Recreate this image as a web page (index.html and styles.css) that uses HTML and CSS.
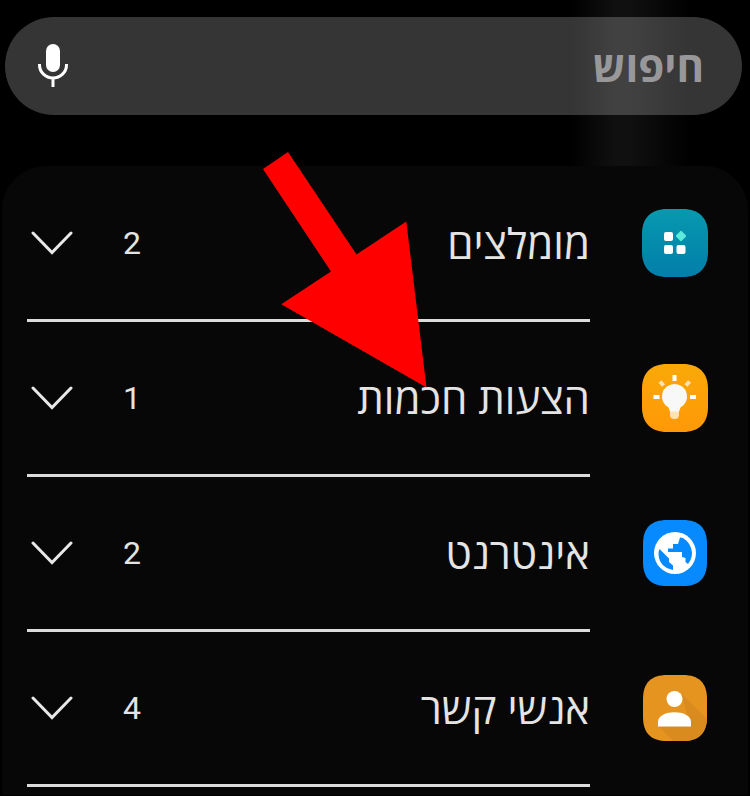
FILE: index.html
```html
<!DOCTYPE html>
<html lang="he" dir="rtl">
<head>
<meta charset="utf-8">
<meta name="viewport" content="width=device-width, initial-scale=1">
<title>חיפוש</title>
<link rel="stylesheet" href="styles.css">
</head>
<body>
<header class="top">
  <form class="search" role="search">
    <input class="search-input" type="text" placeholder="חיפוש" aria-label="חיפוש">
    <button class="mic" type="button" aria-label="חיפוש קולי">
      <svg width="32" height="46" viewBox="0 0 32 46"><rect x="9" y="1" width="14" height="28" rx="7" fill="#fff"/><path d="M2.500 21v1a13.500 13 0 0 0 27 0v-1M16 35v9" fill="none" stroke="#fff" stroke-width="3"/></svg>
    </button>
  </form>
</header>
<main class="panel">
  <ul class="list">
    <li><button class="row" type="button" aria-expanded="false">
      <svg class="icon" viewBox="0 0 66 68"><defs><linearGradient id="teal" x2="0" y2="1"><stop stop-color="#0799ae"/><stop offset="1" stop-color="#027eaa"/></linearGradient></defs><path d="M25 0H41C57 0 66 9 66 25V43C66 59 57 68 41 68H25C9 68 0 59 0 43V25C0 9 9 0 25 0Z" fill="url(#teal)"/><g fill="#fff"><rect x="22" y="23" width="9" height="9" rx="2"/><rect x="22" y="36" width="9" height="9" rx="2"/><rect x="34.500" y="36" width="9" height="9" rx="2"/></g><rect x="35" y="23" width="8" height="8" rx="1.500" transform="rotate(45 39 27)" fill="#5fe8dc"/></svg>
      <span class="body"><span class="label">מומלצים</span><span class="count">2</span>
      <svg class="chevron" viewBox="0 0 42 24"><path d="M2 2 21 21.500 40 2"/></svg></span>
    </button></li>
    <li><button class="row" type="button" aria-expanded="false">
      <svg class="icon" viewBox="0 0 66 68"><defs><linearGradient id="amber" x2="0" y2="1"><stop stop-color="#f9a908"/><stop offset="1" stop-color="#ff9807"/></linearGradient></defs><path d="M25 0H41C57 0 66 9 66 25V43C66 59 57 68 41 68H25C9 68 0 59 0 43V25C0 9 9 0 25 0Z" fill="url(#amber)"/><path d="M28 44h9v7q0 4-4.500 4t-4.500-4Z" fill="#fde2b4"/><path d="M32.500 20a12.500 12.500 0 0 1 6 23.500l-1.500 4h-9L26.500 43.500A12.500 12.500 0 0 1 32.500 20Z" fill="#f8f8f8"/><g stroke="#fff" stroke-width="4"><path d="M32.500 11v6M11.500 33h6M48 33h6"/><path d="m18 17.500 3.500 4M47.500 17.500l-3.500 4" stroke="#fde2b4"/></g></svg>
      <span class="body"><span class="label">הצעות חכמות</span><span class="count">1</span>
      <svg class="chevron" viewBox="0 0 42 24"><path d="M2 2 21 21.500 40 2"/></svg></span>
    </button></li>
    <li><button class="row" type="button" aria-expanded="false">
      <svg class="icon" viewBox="0 0 66 68"><path d="M25 1H41C57 1 65 9 65 25V43C65 59 57 67 41 67H25C9 67 1 59 1 43V25C1 9 9 1 25 1Z" fill="#078afd"/><circle cx="33" cy="34" r="21" fill="#fff"/><path d="M38 18.500 41 19Q49 24 50 33.500 50 40 46 45L43.500 43V39L40 38V33H26V29.500H31V25H36Z" fill="#078afd"/><path d="M17.500 30 27 39.500V43L31 46.500V51Q17 48 16.500 35Q16.500 32 17.500 30Z" fill="#078afd"/></svg>
      <span class="body"><span class="label">אינטרנט</span><span class="count">2</span>
      <svg class="chevron" viewBox="0 0 42 24"><path d="M2 2 21 21.500 40 2"/></svg></span>
    </button></li>
    <li><button class="row" type="button" aria-expanded="false">
      <svg class="icon" viewBox="0 0 66 68"><path d="M25 1H41C57 1 65 9 65 25V43C65 59 57 67 41 67H25C9 67 1 59 1 43V25C1 9 9 1 25 1Z" fill="#e5941f"/><path d="M39 19 65 45C64 59 57 67 41 67H31L17 52 45 40Z" fill="#da8b1e"/><circle cx="32.500" cy="25" r="8" fill="#fff"/><path d="M16 52.500V48C16 35 49 35 49 48v4.500Z" fill="#fff"/></svg>
      <span class="body"><span class="label">אנשי קשר</span><span class="count">4</span>
      <svg class="chevron" viewBox="0 0 42 24"><path d="M2 2 21 21.500 40 2"/></svg></span>
    </button></li>
  </ul>
</main>
<svg class="pointer" width="166" height="238" viewBox="262 151 166 238" aria-hidden="true"><path d="M263 169 288 152 356.500 254.500 406.300 221.500 426.500 387.500 281.300 304.300 331 271.500Z" fill="#f00"/></svg>
</body>
</html>
```
FILE: styles.css
```css
* {
  box-sizing: border-box;
}

body {
  margin: 0;
  position: relative;
  background: #000;
  color: #e4e4e4;
  font-family: "Open Sans", "Noto Sans", sans-serif;
}

.top {
  padding: 17px 8px 51px 5px;
  background: linear-gradient(90deg, transparent 76%, #101010 82%, #101010 84%, transparent 92%);
}

.search {
  display: flex;
  align-items: center;
  height: 98px;
  padding: 0 38px 0 32px;
  border-radius: 49px;
  background: rgba(255, 255, 255, 0.208);
}

.search-input {
  flex: 1;
  min-width: 0;
  padding: 0;
  border: 0;
  outline: 0;
  background: none;
  color: #fff;
  font: 700 42px/56px "Open Sans", "Noto Sans", sans-serif;
}

.search-input::placeholder {
  color: #98989a;
  opacity: 1;
}

.mic {
  display: flex;
  padding: 0;
  border: 0;
  background: none;
}

.panel {
  margin: 0 2px;
  padding: 1px 40px 8px 25px;
  border-radius: 44px 44px 0 0;
  background: #070707;
}

.list {
  margin: 0;
  padding: 0;
  list-style: none;
}

.row {
  display: flex;
  align-items: stretch;
  gap: 52px;
  width: 100%;
  padding: 0;
  border: 0;
  background: none;
  color: inherit;
  font: inherit;
  text-align: start;
}

.icon {
  flex: none;
  align-self: center;
  width: 66px;
  height: 68px;
  margin-bottom: 3px;
}

.body {
  flex: 1;
  display: flex;
  align-items: center;
  height: 155px;
  padding-left: 4px;
  border-bottom: 3px solid #dcdcda;
}

.label {
  flex: 1;
  font-size: 42px;
  line-height: 56px;
}

.count {
  width: 38px;
  margin-left: 40px;
  font: 32px/40px Roboto, sans-serif;
  text-align: center;
}

.chevron {
  width: 42px;
  height: 24px;
  fill: none;
  stroke: #e8e8e8;
  stroke-width: 3;
  stroke-linecap: round;
}

.pointer {
  position: absolute;
  left: 262px;
  top: 151px;
  pointer-events: none;
}
```
